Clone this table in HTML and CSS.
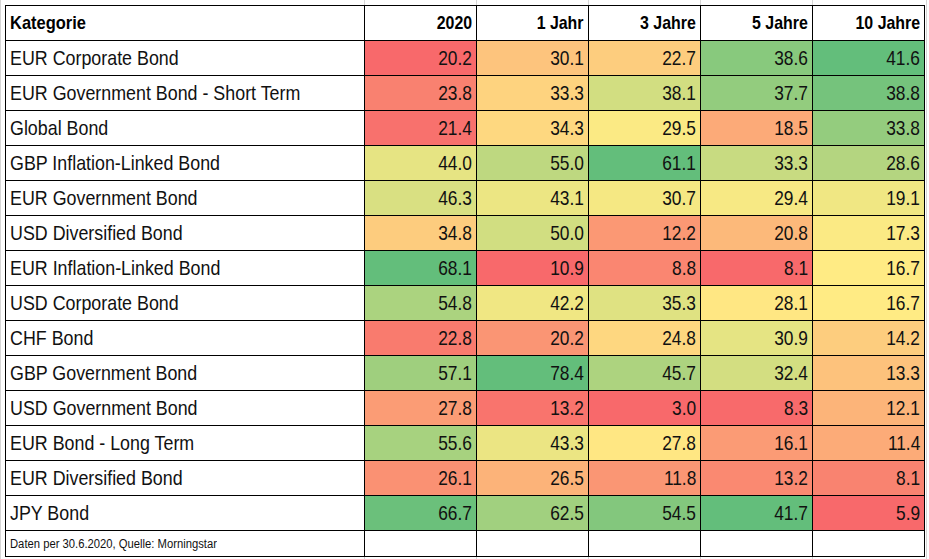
FILE: index.html
```html
<!DOCTYPE html>
<html lang="de">
<head>
<meta charset="utf-8">
<title>Kategorien</title>
<link rel="stylesheet" href="styles.css">
</head>
<body>
<div class="sheet">
<table class="perf">
<colgroup><col class="c-cat"><col class="c-num"><col class="c-num"><col class="c-num"><col class="c-num"><col class="c-num"></colgroup>
<thead>
<tr><th class="cat"><span class="t">Kategorie</span></th><th><span class="t">2020</span></th><th><span class="t">1 Jahr</span></th><th><span class="t">3 Jahre</span></th><th><span class="t">5 Jahre</span></th><th><span class="t">10 Jahre</span></th></tr>
</thead>
<tbody class="heat">
<tr><td class="cat"><span class="t">EUR Corporate Bond</span></td><td><span class="t">20.2</span></td><td><span class="t">30.1</span></td><td><span class="t">22.7</span></td><td><span class="t">38.6</span></td><td><span class="t">41.6</span></td></tr>
<tr><td class="cat"><span class="t">EUR Government Bond - Short Term</span></td><td><span class="t">23.8</span></td><td><span class="t">33.3</span></td><td><span class="t">38.1</span></td><td><span class="t">37.7</span></td><td><span class="t">38.8</span></td></tr>
<tr><td class="cat"><span class="t">Global Bond</span></td><td><span class="t">21.4</span></td><td><span class="t">34.3</span></td><td><span class="t">29.5</span></td><td><span class="t">18.5</span></td><td><span class="t">33.8</span></td></tr>
<tr><td class="cat"><span class="t">GBP Inflation-Linked Bond</span></td><td><span class="t">44.0</span></td><td><span class="t">55.0</span></td><td><span class="t">61.1</span></td><td><span class="t">33.3</span></td><td><span class="t">28.6</span></td></tr>
<tr><td class="cat"><span class="t">EUR Government Bond</span></td><td><span class="t">46.3</span></td><td><span class="t">43.1</span></td><td><span class="t">30.7</span></td><td><span class="t">29.4</span></td><td><span class="t">19.1</span></td></tr>
<tr><td class="cat"><span class="t">USD Diversified Bond</span></td><td><span class="t">34.8</span></td><td><span class="t">50.0</span></td><td><span class="t">12.2</span></td><td><span class="t">20.8</span></td><td><span class="t">17.3</span></td></tr>
<tr><td class="cat"><span class="t">EUR Inflation-Linked Bond</span></td><td><span class="t">68.1</span></td><td><span class="t">10.9</span></td><td><span class="t">8.8</span></td><td><span class="t">8.1</span></td><td><span class="t">16.7</span></td></tr>
<tr><td class="cat"><span class="t">USD Corporate Bond</span></td><td><span class="t">54.8</span></td><td><span class="t">42.2</span></td><td><span class="t">35.3</span></td><td><span class="t">28.1</span></td><td><span class="t">16.7</span></td></tr>
<tr><td class="cat"><span class="t">CHF Bond</span></td><td><span class="t">22.8</span></td><td><span class="t">20.2</span></td><td><span class="t">24.8</span></td><td><span class="t">30.9</span></td><td><span class="t">14.2</span></td></tr>
<tr><td class="cat"><span class="t">GBP Government Bond</span></td><td><span class="t">57.1</span></td><td><span class="t">78.4</span></td><td><span class="t">45.7</span></td><td><span class="t">32.4</span></td><td><span class="t">13.3</span></td></tr>
<tr><td class="cat"><span class="t">USD Government Bond</span></td><td><span class="t">27.8</span></td><td><span class="t">13.2</span></td><td><span class="t">3.0</span></td><td><span class="t">8.3</span></td><td><span class="t">12.1</span></td></tr>
<tr><td class="cat"><span class="t">EUR Bond - Long Term</span></td><td><span class="t">55.6</span></td><td><span class="t">43.3</span></td><td><span class="t">27.8</span></td><td><span class="t">16.1</span></td><td><span class="t">11.4</span></td></tr>
<tr><td class="cat"><span class="t">EUR Diversified Bond</span></td><td><span class="t">26.1</span></td><td><span class="t">26.5</span></td><td><span class="t">11.8</span></td><td><span class="t">13.2</span></td><td><span class="t">8.1</span></td></tr>
<tr><td class="cat"><span class="t">JPY Bond</span></td><td><span class="t">66.7</span></td><td><span class="t">62.5</span></td><td><span class="t">54.5</span></td><td><span class="t">41.7</span></td><td><span class="t">5.9</span></td></tr>
</tbody>
<tfoot>
<tr><td class="note"><span class="t">Daten per 30.6.2020, Quelle: Morningstar</span></td><td></td><td></td><td></td><td></td><td></td></tr>
</tfoot>
</table>
</div>
<script src="app.js"></script>
</body>
</html>
```
FILE: styles.css
```css
html, body {
  margin: 0;
  padding: 0;
  background: #fff;
}
.sheet {
  width: 929px;
  height: 559px;
  box-sizing: border-box;
  padding: 5px 0 0 5px;
  overflow: hidden;
  background-color: #fff;
  background-image:
    linear-gradient(to right,
      #d6d6d6 0 1px, transparent 1px 364px,
      #d6d6d6 364px 365px, transparent 365px 476px,
      #d6d6d6 476px 477px, transparent 477px 588px,
      #d6d6d6 588px 589px, transparent 589px 700px,
      #d6d6d6 700px 701px, transparent 701px 812px,
      #d6d6d6 812px 813px, transparent 813px 926px,
      #d6d6d6 926px 927px, transparent 927px),
    repeating-linear-gradient(to bottom,
      transparent 0 40px, #d6d6d6 40px 41px, transparent 41px 75px);
  background-size: 100% 100%, 100% 35px;
  background-repeat: no-repeat, repeat-y;
  background-position: 0 0, 0 5px;
}
.perf {
  border-collapse: collapse;
  table-layout: fixed;
  width: 920px;
  background: #fff;
  font-family: "Liberation Sans", Arial, sans-serif;
  color: #111;
}
.c-cat { width: 359px; }
.c-num { width: 112px; }
.perf th, .perf td {
  border: 1px solid #000;
  padding: 0 4px;
  text-align: right;
  white-space: nowrap;
  overflow: hidden;
}
.perf thead tr, .perf tbody tr {
  height: 35px;
}
.perf .t {
  display: inline-block;
  transform-origin: right center;
  transform: scaleX(0.825);
}
.perf .cat .t, .perf .note .t {
  transform-origin: left center;
}
.perf th {
  font-size: 18.5px;
  font-weight: bold;
  color: #000;
}
.perf th .t {
  transform: scaleX(0.86);
}
.perf td {
  font-size: 21px;
  font-weight: normal;
}
.perf td.cat .t {
  transform: scaleX(0.85);
}
.perf th.cat .t {
  transform: scaleX(0.89);
}
.perf .cat {
  text-align: left;
}
.perf tfoot tr {
  height: 26px;
}
.perf .note {
  font-size: 12.5px;
  text-align: left;
}
.perf .note .t {
  transform: scaleX(0.9);
}
```
FILE: app.js
```js
(function () {
  var minC = [248, 105, 107];
  var midC = [255, 235, 132];
  var maxC = [99, 190, 123];
  function mix(a, b, t) {
    return a.map(function (v, i) { return Math.round(v + (b[i] - v) * t); });
  }
  function median(arr) {
    var s = arr.slice().sort(function (a, b) { return a - b; });
    var n = s.length;
    var pos = (n - 1) * 0.5;
    var lo = Math.floor(pos), hi = Math.ceil(pos);
    return s[lo] + (s[hi] - s[lo]) * (pos - lo);
  }
  var rows = document.querySelectorAll('.heat tr');
  var cols = rows[0].children.length;
  for (var c = 1; c < cols; c++) {
    var cells = [];
    var vals = [];
    rows.forEach(function (r) {
      var cell = r.children[c];
      cells.push(cell);
      vals.push(parseFloat(cell.textContent));
    });
    var mn = Math.min.apply(null, vals);
    var mx = Math.max.apply(null, vals);
    var md = median(vals);
    cells.forEach(function (cell, i) {
      var v = vals[i];
      var col;
      if (v <= md) {
        col = mix(minC, midC, md === mn ? 1 : (v - mn) / (md - mn));
      } else {
        col = mix(midC, maxC, mx === md ? 1 : (v - md) / (mx - md));
      }
      cell.style.backgroundColor = 'rgb(' + col.join(',') + ')';
    });
  }
})();
```
